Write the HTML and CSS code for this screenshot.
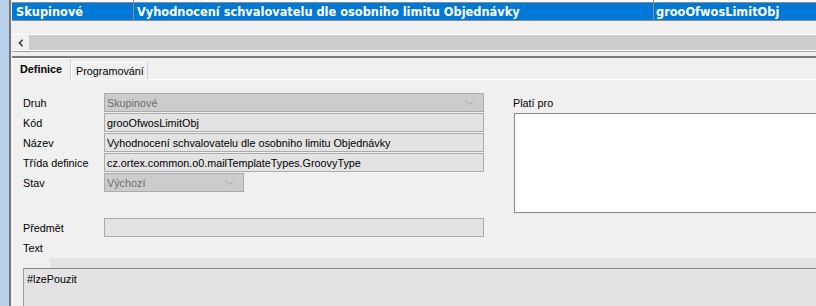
FILE: index.html
```html
<!DOCTYPE html>
<html lang="cs">
<head>
<meta charset="utf-8">
<title>Šablona</title>
<link rel="stylesheet" href="styles.css">
</head>
<body>
<div class="app">
  <div class="side"></div>
  <div class="main">
    <div class="grid">
      <div class="row prev">
        <div class="cell c1"></div>
        <div class="cell c2"></div>
        <div class="cell c3"></div>
      </div>
      <div class="row sel">
        <div class="cell c1">Skupinové</div>
        <div class="cell c2">Vyhodnocení schvalovatelu dle osobniho limitu Objednávky</div>
        <div class="cell c3">grooOfwosLimitObj</div>
      </div>
      <div class="grid-empty"></div>
      <div class="hscroll">
        <div class="sbtn"><svg width="6" height="8" viewBox="0 0 6 8"><polyline points="4.5,0.8 1.5,4 4.5,7.2" fill="none" stroke="#3c3c3c" stroke-width="1.6"/></svg></div>
        <div class="strack"></div>
      </div>
    </div>
    <div class="splitter"></div>
    <div class="tabs">
      <div class="tab active">Definice</div>
      <div class="tab">Programování</div>
      <div class="tab-rest"></div>
    </div>
    <div class="panel">
      <div class="form">
        <div class="fields">
          <div class="lbl">Druh</div>
          <div class="inp combo wide dis">Skupinové<svg class="chev" width="9" height="5" viewBox="0 0 9 5"><polyline points="0.5,0.5 4.5,4.5 8.5,0.5" fill="none" stroke="#a8a8a8"/></svg></div>
          <div class="lbl">Kód</div>
          <div class="inp">grooOfwosLimitObj</div>
          <div class="lbl">Název</div>
          <div class="inp">Vyhodnocení schvalovatelu dle osobniho limitu Objednávky</div>
          <div class="lbl">Třída definice</div>
          <div class="inp">cz.ortex.common.o0.mailTemplateTypes.GroovyType</div>
          <div class="lbl">Stav</div>
          <div class="inp combo short dis">Výchozí<svg class="chev" width="9" height="5" viewBox="0 0 9 5"><polyline points="0.5,0.5 4.5,4.5 8.5,0.5" fill="none" stroke="#a8a8a8"/></svg></div>
        </div>
        <div class="valid">
          <div class="valid-lbl">Platí pro</div>
          <div class="valid-box"></div>
        </div>
      </div>
      <div class="subject">
        <div class="lbl">Předmět</div>
        <div class="inp"></div>
      </div>
      <div class="text-lbl">Text</div>
      <div class="editor-head"></div>
      <div class="editor">#lzePouzit</div>
    </div>
  </div>
</div>
</body>
</html>
```

FILE: styles.css
```css
html, body {
  margin: 0;
  padding: 0;
}
body {
  width: 816px;
  height: 306px;
  overflow: hidden;
  background: #f0f0f0;
  font-family: "Liberation Sans", Arial, sans-serif;
  font-size: 10.8px;
  color: #000;
}
.app {
  display: flex;
  height: 306px;
}
.side {
  width: 9px;
  flex: none;
  background: #b9d1ea;
  border-right: 2px solid #767676;
}
.main {
  flex: 1;
  min-width: 0;
  display: flex;
  flex-direction: column;
  padding-left: 1px;
  overflow: hidden;
}
/* grid */
.row {
  display: flex;
}
.row.prev {
  height: 2px;
  background: #ffffff;
}
.row.sel {
  height: 17px;
  background: #0078d7;
  color: #fff;
  font-family: "DejaVu Sans", Verdana, sans-serif;
  font-weight: bold;
  font-size: 11.4px;
  border-top: 1px solid #8c8c8c;
  border-bottom: 1px solid #8c8c8c;
  align-items: stretch;
}
.cell {
  display: flex;
  align-items: center;
  white-space: nowrap;
  overflow: hidden;
  padding-left: 3px;
  box-sizing: border-box;
}
.c1 {
  width: 122px;
  border-right: 1px solid #8c8c8c;
  padding-left: 4px;
}
.c2 {
  width: 520px;
  border-right: 1px solid #8c8c8c;
}
.c3 {
  flex: 1;
  padding-left: 2px;
}
.grid-empty {
  height: 13px;
  background: #f0f0f0;
}
.hscroll {
  display: flex;
  height: 15px;
  border-top: 1px solid #ffffff;
  border-bottom: 1px solid #ffffff;
}
.sbtn {
  width: 17px;
  background: #f0f0f0;
  display: flex;
  align-items: center;
  justify-content: center;
}
.strack {
  flex: 1;
  background: #cdcdcd;
}
.splitter {
  height: 4px;
  border-top: 1px solid #a0a0a0;
  border-bottom: 2px solid #7a7a7a;
}
/* tabs */
.tabs {
  display: flex;
  align-items: flex-end;
  height: 22px;
}
.tab {
  height: 18px;
  box-sizing: border-box;
  padding: 0 3px 0 4px;
  display: flex;
  align-items: center;
  border-top: 1px solid #ffffff;
  border-left: 1px solid #ffffff;
  border-right: 1px solid #d2d2d2;
  border-bottom: 1px solid #ffffff;
  white-space: nowrap;
}
.tab.active {
  height: 22px;
  font-weight: bold;
  padding: 0 8px 1px 7px;
  border-bottom: none;
}
.tab-rest {
  flex: 1;
  border-bottom: 1px solid #ffffff;
}
/* panel */
.panel {
  flex: 1;
  border-left: 1px solid #ffffff;
  display: flex;
  flex-direction: column;
  min-height: 0;
}
.form {
  display: flex;
  align-items: flex-start;
  padding: 13px 0 0 10px;
}
.fields {
  display: grid;
  grid-template-columns: 81px 380px;
  grid-auto-rows: 19px;
  row-gap: 1px;
}
.lbl {
  display: flex;
  align-items: center;
  white-space: nowrap;
}
.inp {
  box-sizing: border-box;
  height: 19px;
  border: 1px solid #ababab;
  background: #e3e3e3;
  padding-left: 2px;
  display: flex;
  align-items: center;
  white-space: nowrap;
}
.inp.combo {
  background: #cccccc;
  justify-content: space-between;
  padding-right: 9px;
}
.inp.dis {
  color: #6d6d6d;
}
.inp.short {
  width: 140px;
}
.valid {
  margin-left: 29px;
  flex: 1;
  display: flex;
  flex-direction: column;
}
.valid-lbl {
  height: 20px;
  display: flex;
  align-items: center;
}
.valid-box {
  margin-left: 1px;
  width: 320px;
  height: 100px;
  box-sizing: border-box;
  background: #ffffff;
  border: 1px solid #828790;
}
.subject {
  display: grid;
  grid-template-columns: 81px 380px;
  height: 19px;
  margin: 5px 0 0 10px;
}
.text-lbl {
  height: 21px;
  display: flex;
  align-items: center;
  padding-left: 10px;
}
.editor-head {
  height: 10px;
  margin-left: 37px;
  background: #e3e3e3;
}
.editor {
  flex: 1;
  margin-left: 10px;
  background: #e3e3e3;
  border-top: 1px solid #828790;
  border-left: 1px solid #9a9a9a;
  padding: 4px 3px;
}
```
